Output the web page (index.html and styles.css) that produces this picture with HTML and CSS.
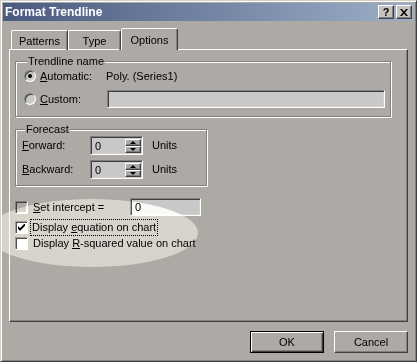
FILE: index.html
```html
<!DOCTYPE html>
<html lang="en">
<head>
    <meta charset="UTF-8">
    <title>Format Trendline</title>
    <link rel="stylesheet" href="styles.css">
</head>
<body>
    <div class="window">
        <div class="titlebar">
            <span class="title">Format Trendline</span>
            <div class="tb-buttons">
                <div class="tb-btn help">?</div>
                <div class="tb-btn">
                    <svg width="8" height="7" viewBox="0 0 8 7"><path d="M0 0h2l2 2.5 2-2.5h2L5 3.5 8 7H6L4 4.5 2 7H0l3-3.5z" fill="#000"/></svg>
                </div>
            </div>
        </div>

        <div class="dialog">
            <div class="tabs">
                <div class="tab tab-patterns">Patterns</div>
                <div class="tab tab-type">Type</div>
                <div class="tab tab-options active">Options</div>
            </div>

            <div class="panel">
                <fieldset class="group group-name">
                    <legend>Trendline name</legend>
                    <div class="row row-auto">
                        <span class="radio checked"></span>
                        <span class="label-name"><u>A</u>utomatic:</span>
                        <span>Poly. (Series1)</span>
                    </div>
                    <div class="row row-custom">
                        <span class="radio"></span>
                        <span class="label-name"><u>C</u>ustom:</span>
                        <span class="textbox custom-box"></span>
                    </div>
                </fieldset>

                <fieldset class="group group-forecast">
                    <legend>Forecast</legend>
                    <div class="row row-spin">
                        <span class="label-spin"><u>F</u>orward:</span>
                        <div class="spin">
                            <span class="spin-value">0</span>
                            <div class="spin-arrows">
                                <span class="spin-btn up"></span>
                                <span class="spin-btn down"></span>
                            </div>
                        </div>
                        <span class="units">Units</span>
                    </div>
                    <div class="row row-spin second">
                        <span class="label-spin"><u>B</u>ackward:</span>
                        <div class="spin">
                            <span class="spin-value">0</span>
                            <div class="spin-arrows">
                                <span class="spin-btn up"></span>
                                <span class="spin-btn down"></span>
                            </div>
                        </div>
                        <span class="units">Units</span>
                    </div>
                </fieldset>

                <div class="checks">
                    <div class="row row-intercept">
                        <span class="checkbox disabled"></span>
                        <span class="check-label intercept-label"><u>S</u>et intercept =</span>
                        <span class="textbox intercept-box">0</span>
                    </div>
                    <div class="row row-check">
                        <span class="checkbox">
                            <svg width="7" height="7" viewBox="0 0 7 7"><path d="M0 2v3l2 2 5-5V-1L2 4z" fill="#000"/></svg>
                        </span>
                        <span class="check-label focused">Display <u>e</u>quation on chart</span>
                    </div>
                    <div class="row row-check">
                        <span class="checkbox"></span>
                        <span class="check-label">Display <u>R</u>-squared value on chart</span>
                    </div>
                </div>
            </div>

            <div class="buttons">
                <div class="btn default">OK</div>
                <div class="btn">Cancel</div>
            </div>
        </div>

        <div class="highlight"></div>
    </div>
</body>
</html>
```

FILE: styles.css
```css
body {
    margin: 0;
    font-family: "Liberation Sans", Arial, sans-serif;
    font-size: 11px;
    line-height: 13px;
    color: #000;
}
.window {
    position: relative;
    width: 417px;
    height: 362px;
    box-sizing: border-box;
    overflow: hidden;
    background: #adaaa5;
    border: 1px solid;
    border-color: #d4d0c8 #404040 #404040 #d4d0c8;
    box-shadow: inset 1px 1px #fff, inset -1px -1px #808080;
    padding: 2px;
}
.titlebar {
    height: 18px;
    display: flex;
    align-items: center;
    justify-content: space-between;
    padding: 0 2px;
    background: linear-gradient(to right, #4a5a80, #9cafc7);
}
.title {
    color: #fff;
    font-weight: bold;
    font-size: 12px;
}
.tb-buttons {
    display: flex;
    gap: 2px;
}
.tb-btn {
    width: 16px;
    height: 14px;
    box-sizing: border-box;
    display: flex;
    align-items: center;
    justify-content: center;
    background: #c6c3be;
    border: 1px solid;
    border-color: #fff #404040 #404040 #fff;
    box-shadow: inset -1px -1px #808080;
}
.tb-btn.help {
    font-weight: bold;
    font-size: 11px;
}
.dialog {
    padding: 8px 6px 0 6px;
}
.tabs {
    display: flex;
    align-items: flex-end;
    height: 21px;
    padding-left: 2px;
    margin-bottom: -1px;
    position: relative;
    z-index: 1;
}
.tab {
    height: 20px;
    box-sizing: border-box;
    display: flex;
    justify-content: center;
    padding-top: 4px;
    border: 1px solid;
    border-bottom: none;
    border-color: #fff #404040 transparent #fff;
    box-shadow: inset -1px 0 #808080;
    border-radius: 2px 2px 0 0;
}
.tab-patterns {
    width: 57px;
}
.tab-type {
    width: 53px;
}
.tab-options {
    width: 57px;
}
.tab.active {
    height: 22px;
    padding-top: 5px;
    background: #adaaa5;
}
.panel {
    height: 273px;
    box-sizing: border-box;
    border: 1px solid;
    border-color: #fff #404040 #404040 #fff;
    box-shadow: inset -1px -1px #808080;
    padding: 5px 0 0 5px;
}
.group {
    margin: 0;
    padding: 0 0 0 8px;
    box-sizing: border-box;
    border: 1px solid #808080;
    box-shadow: inset 1px 1px #fff, 1px 1px #fff;
}
.group legend {
    padding: 0 1px;
    margin-left: 3px;
    background: #adaaa5;
}
.group-name {
    width: 376px;
    padding-bottom: 8px;
}
.group-forecast {
    width: 192px;
    margin-top: 6px;
    padding-left: 6px;
    padding-bottom: 6px;
}
.row {
    display: flex;
    align-items: center;
}
.row-auto {
    height: 16px;
}
.row-custom {
    height: 18px;
    margin-top: 6px;
}
.radio {
    position: relative;
    width: 12px;
    height: 12px;
    box-sizing: border-box;
    border-radius: 50%;
    border: 1px solid;
    border-color: #808080 #fff #fff #808080;
    box-shadow: inset 1px 1px #404040, inset -1px -1px #d4d0c8;
    background: #c8c8c8;
}
.radio.checked::after {
    content: "";
    position: absolute;
    left: 3px;
    top: 3px;
    width: 4px;
    height: 4px;
    border-radius: 50%;
    background: #000;
}
.label-name {
    width: 66px;
    margin-left: 4px;
}
.textbox {
    box-sizing: border-box;
    height: 18px;
    background: #c8c8c8;
    border: 1px solid;
    border-color: #808080 #fff #fff #808080;
    box-shadow: inset 1px 1px #404040, inset -1px -1px #d4d0c8;
    padding: 2px 3px;
}
.custom-box {
    width: 278px;
    margin-left: 1px;
}
.row-spin {
    height: 19px;
}
.row-spin.second {
    margin-top: 5px;
}
.label-spin {
    width: 68px;
}
.spin {
    display: flex;
    width: 53px;
    height: 19px;
    box-sizing: border-box;
    background: #c8c8c8;
    border: 1px solid;
    border-color: #808080 #fff #fff #808080;
    box-shadow: inset 1px 1px #404040, inset -1px -1px #d4d0c8;
    padding: 2px 1px 1px 2px;
}
.spin-value {
    flex: 1;
    padding-left: 2px;
    line-height: 14px;
}
.spin-arrows {
    display: flex;
    flex-direction: column;
    width: 16px;
}
.spin-btn {
    flex: 1;
    box-sizing: border-box;
    display: flex;
    align-items: center;
    justify-content: center;
    background: #adaaa5;
    border: 1px solid;
    border-color: #fff #404040 #404040 #fff;
    box-shadow: inset -1px -1px #808080;
}
.spin-btn.up::after {
    content: "";
    border: 3px solid transparent;
    border-top: none;
    border-bottom: 3px solid #000;
}
.spin-btn.down::after {
    content: "";
    border: 3px solid transparent;
    border-bottom: none;
    border-top: 3px solid #000;
}
.units {
    margin-left: 9px;
}
.checks {
    margin-top: 12px;
}
.row-intercept {
    height: 18px;
}
.row-check {
    height: 16px;
}
.row-intercept + .row-check {
    margin-top: 3px;
}
.checkbox {
    width: 13px;
    height: 13px;
    box-sizing: border-box;
    display: flex;
    align-items: center;
    justify-content: center;
    background: #fff;
    border: 1px solid;
    border-color: #808080 #fff #fff #808080;
    box-shadow: inset 1px 1px #404040, inset -1px -1px #d4d0c8;
}
.checkbox.disabled {
    background: #adaaa5;
}
.check-label {
    margin-left: 2px;
    padding: 1px 2px;
    border: 1px solid transparent;
}
.check-label.focused {
    border: 1px dotted #000;
    padding: 1px 1px;
    padding-left: 1px;
}
.intercept-label {
    width: 100px;
    box-sizing: border-box;
}
.intercept-box {
    width: 71px;
    margin-left: 0;
    padding: 2px 4px;
}
.buttons {
    display: flex;
    justify-content: flex-end;
    gap: 10px;
    margin-top: 9px;
}
.btn {
    width: 74px;
    height: 22px;
    box-sizing: border-box;
    display: flex;
    align-items: center;
    justify-content: center;
    border: 1px solid;
    border-color: #fff #404040 #404040 #fff;
    box-shadow: inset -1px -1px #808080;
}
.btn.default {
    border-color: #000;
    box-shadow: inset 1px 1px #fff, inset -1px -1px #404040, inset -2px -2px #808080;
}
.highlight {
    position: absolute;
    left: -15px;
    top: 198px;
    width: 212px;
    height: 68px;
    border-radius: 50%;
    background: rgb(50, 51, 48);
    mix-blend-mode: color-dodge;
    pointer-events: none;
}
```
